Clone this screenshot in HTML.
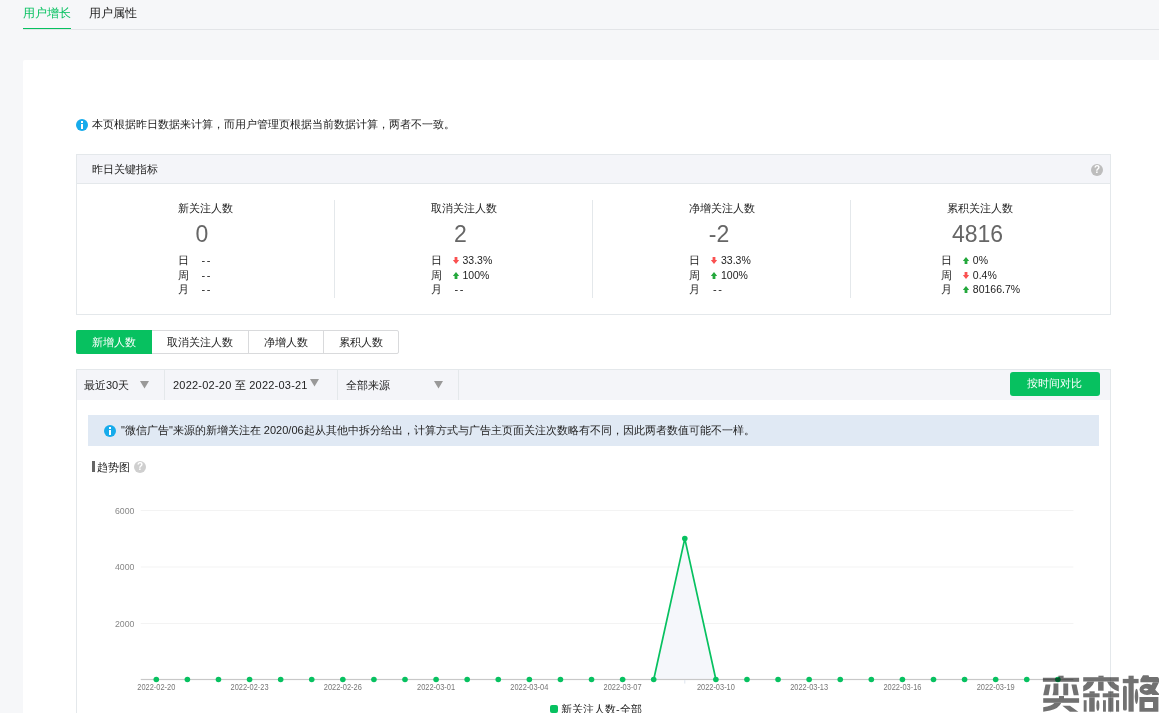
<!DOCTYPE html>
<html><head><meta charset="utf-8">
<style>
*{box-sizing:border-box;margin:0;padding:0}
html,body{width:1159px;height:713px;overflow:hidden}
body{background:#f6f7f9;font-family:"Liberation Sans",sans-serif;color:#222;position:relative}
.a{position:absolute;white-space:nowrap}
.cj{font-size:11px;line-height:12px}
</style></head><body>
<!-- top tabs -->
<div class="a" style="left:23px;top:28px;width:1136px;height:1px;background:#e3e5e8;top:29px"></div>
<div class="a" style="left:23px;top:27.6px;width:48px;height:1.7px;background:#07c160"></div>
<div class="a" style="left:23px;top:6px;font-size:12px;line-height:14px;color:#07c160">用户增长</div>
<div class="a" style="left:89px;top:6px;font-size:12px;line-height:14px;color:#222">用户属性</div>

<!-- white card -->
<div class="a" style="left:23px;top:60px;width:1140px;height:700px;background:#fff;border-radius:2px"></div>

<!-- info line -->
<div class="a" style="left:76px;top:119px;width:12px;height:12px;border-radius:50%;background:#16abeb"></div>
<div class="a" style="left:81px;top:121px;width:2px;height:2px;background:#fff"></div>
<div class="a" style="left:81px;top:124px;width:2px;height:5px;background:#fff"></div>
<div class="a cj" style="left:92px;top:118px">本页根据昨日数据来计算，而用户管理页根据当前数据计算，两者不一致。</div>

<!-- metrics box -->
<div class="a" style="left:76px;top:154px;width:1035px;height:161px;border:1px solid #e4e8eb"></div>
<div class="a" style="left:77px;top:155px;width:1033px;height:29px;background:#f4f5f9;border-bottom:1px solid #e4e8eb"></div>
<div class="a cj" style="left:92px;top:163px">昨日关键指标</div>

<!-- metric columns -->
<div class="a" style="left:334px;top:200px;width:1px;height:98px;background:#e4e8eb"></div>
<div class="a" style="left:592px;top:200px;width:1px;height:98px;background:#e4e8eb"></div>
<div class="a" style="left:850px;top:200px;width:1px;height:98px;background:#e4e8eb"></div>
<style>
.col{position:absolute;top:202px;width:258px;text-align:center}
.blk{display:inline-block;text-align:left;position:relative}
.ttl{font-size:11px;line-height:12px;text-align:center;color:#222}
.num{font-size:23px;line-height:26px;text-align:center;color:#666;margin-top:7px;padding-right:6px}
.rows{margin-top:6px;font-size:11px;line-height:14.5px;color:#222}
.rows span.l{display:inline-block;width:22px}
.up,.dn{display:inline-block;width:6px;height:7px;position:relative;top:0px;margin-right:4px;vertical-align:0px}
.dd{letter-spacing:1.6px;margin-left:2px}
.pct{font-size:10.5px}
</style>
<div class="col" style="left:76px"><div class="blk">
 <div class="ttl">新关注人数</div><div class="num">0</div>
 <div class="rows"><div><span class="l">日</span><span class="dd">--</span></div><div><span class="l">周</span><span class="dd">--</span></div><div><span class="l">月</span><span class="dd">--</span></div></div>
</div></div>
<div class="col" style="left:334.5px"><div class="blk">
 <div class="ttl">取消关注人数</div><div class="num">2</div>
 <div class="rows"><div><span class="l">日</span><svg class="dn" viewBox="0 0 6 7"><path d="M1.6 0h2.8v3H6.2L3 7 -0.2 3h1.8z" fill="#fa5151"/></svg><span class="pct">33.3%</span></div><div><span class="l">周</span><svg class="up" viewBox="0 0 6 7"><path d="M1.6 7h2.8V4H6.2L3 0 -0.2 4h1.8z" fill="#24a83c"/></svg><span class="pct">100%</span></div><div><span class="l">月</span><span class="dd">--</span></div></div>
</div></div>
<div class="col" style="left:593px"><div class="blk">
 <div class="ttl">净增关注人数</div><div class="num">-2</div>
 <div class="rows"><div><span class="l">日</span><svg class="dn" viewBox="0 0 6 7"><path d="M1.6 0h2.8v3H6.2L3 7 -0.2 3h1.8z" fill="#fa5151"/></svg><span class="pct">33.3%</span></div><div><span class="l">周</span><svg class="up" viewBox="0 0 6 7"><path d="M1.6 7h2.8V4H6.2L3 0 -0.2 4h1.8z" fill="#24a83c"/></svg><span class="pct">100%</span></div><div><span class="l">月</span><span class="dd">--</span></div></div>
</div></div>
<div class="col" style="left:851.5px"><div class="blk">
 <div class="ttl">累积关注人数</div><div class="num">4816</div>
 <div class="rows"><div><span class="l">日</span><svg class="up" viewBox="0 0 6 7"><path d="M1.6 7h2.8V4H6.2L3 0 -0.2 4h1.8z" fill="#24a83c"/></svg><span class="pct">0%</span></div><div><span class="l">周</span><svg class="dn" viewBox="0 0 6 7"><path d="M1.6 0h2.8v3H6.2L3 7 -0.2 3h1.8z" fill="#fa5151"/></svg><span class="pct">0.4%</span></div><div><span class="l">月</span><svg class="up" viewBox="0 0 6 7"><path d="M1.6 7h2.8V4H6.2L3 0 -0.2 4h1.8z" fill="#24a83c"/></svg><span class="pct">80166.7%</span></div></div>
</div></div>

<!-- data tabs -->
<div class="a" style="left:76px;top:330px;width:323px;height:24px;border:1px solid #d9dadc;border-radius:2px;background:#fff"></div>
<div class="a" style="left:76px;top:330px;width:76px;height:24px;background:#07c160;border-radius:2px 0 0 2px"></div>
<div class="a" style="left:248px;top:331px;width:1px;height:22px;background:#d9dadc"></div>
<div class="a" style="left:323px;top:331px;width:1px;height:22px;background:#d9dadc"></div>
<div class="a cj" style="left:92px;top:336px;color:#fff">新增人数</div>
<div class="a cj" style="left:167px;top:336px">取消关注人数</div>
<div class="a cj" style="left:264px;top:336px">净增人数</div>
<div class="a cj" style="left:339px;top:336px">累积人数</div>

<!-- chart container -->
<div class="a" style="left:76px;top:369px;width:1035px;height:400px;border:1px solid #e4e8eb;border-bottom:none"></div>
<div class="a" style="left:77px;top:370px;width:1033px;height:30px;background:#f4f5f9"></div>
<div class="a" style="left:164px;top:370px;width:1px;height:30px;background:#e4e8eb"></div>
<div class="a" style="left:337px;top:370px;width:1px;height:30px;background:#e4e8eb"></div>
<div class="a" style="left:458px;top:370px;width:1px;height:30px;background:#e4e8eb"></div>
<div class="a cj" style="left:84px;top:379px">最近30天</div>
<svg class="a" style="left:140px;top:381px" width="9" height="8" viewBox="0 0 9 8"><path d="M0 0h9L4.5 7.5z" fill="#999"/></svg>
<div class="a" style="left:173px;top:379px;font-size:11px;line-height:13px;letter-spacing:0.22px;color:#222">2022-02-20 至 2022-03-21</div>
<svg class="a" style="left:310px;top:379px" width="9" height="8" viewBox="0 0 9 8"><path d="M0 0h9L4.5 7.5z" fill="#999"/></svg>
<div class="a cj" style="left:346px;top:379px">全部来源</div>
<svg class="a" style="left:434px;top:381px" width="9" height="8" viewBox="0 0 9 8"><path d="M0 0h9L4.5 7.5z" fill="#999"/></svg>
<div class="a" style="left:1010px;top:372px;width:90px;height:24px;background:#07c160;border-radius:3px"></div>
<div class="a cj" style="left:1027px;top:377px;color:#fff">按时间对比</div>

<!-- blue notice -->
<div class="a" style="left:88px;top:415px;width:1011px;height:31px;background:#e0e9f4"></div>
<div class="a" style="left:104px;top:425px;width:12px;height:12px;border-radius:50%;background:#16abeb"></div>
<div class="a" style="left:109px;top:427px;width:2px;height:2px;background:#fff"></div>
<div class="a" style="left:109px;top:430px;width:2px;height:5px;background:#fff"></div>
<div class="a cj" style="left:121px;top:424px">"微信广告"来源的新增关注在 2020/06起从其他中拆分给出，计算方式与广告主页面关注次数略有不同，因此两者数值可能不一样。</div>

<!-- trend title -->
<div class="a" style="left:92px;top:461px;width:3px;height:11px;background:#666"></div>
<div class="a cj" style="left:97px;top:461px">趋势图</div>
<div class="a" style="left:134px;top:461px;width:12px;height:12px;border-radius:50%;background:#cfcfcf"></div>
<div class="a" style="left:134px;top:461px;width:12px;height:12px;font-size:10px;line-height:12px;font-weight:bold;color:#fff;text-align:center">?</div>
<div class="a" style="left:1091px;top:164px;width:12px;height:12px;border-radius:50%;background:#bdbdbd"></div>
<div class="a" style="left:1091px;top:164px;width:12px;height:12px;font-size:10px;line-height:12px;font-weight:bold;color:#fff;text-align:center">?</div>

<!-- chart -->
<svg class="a" style="left:0;top:0" width="1159" height="713" viewBox="0 0 1159 713">
<rect x="140.76" y="510.0" width="932.64" height="1" fill="#f3f3f3"/>
<rect x="140.76" y="566.5" width="932.64" height="1" fill="#f3f3f3"/>
<rect x="140.76" y="623.0" width="932.64" height="1" fill="#f3f3f3"/>
<path d="M653.71 679.5 L684.80 538.6 L715.89 679.5Z" fill="#f5f7fb"/>
<path d="M653.71 679.5 L684.80 538.6 L715.89 679.5" fill="none" stroke="#07c160" stroke-width="1.7" stroke-linejoin="round"/>
<rect x="140.76" y="678.9" width="932.64" height="1.2" fill="#c8c8c8"/>
<rect x="684.30" y="680.1" width="1" height="3.5" fill="#dde4ee"/>
<circle cx="156.30" cy="679.5" r="2.8" fill="#07c160"/>
<circle cx="187.39" cy="679.5" r="2.8" fill="#07c160"/>
<circle cx="218.48" cy="679.5" r="2.8" fill="#07c160"/>
<circle cx="249.57" cy="679.5" r="2.8" fill="#07c160"/>
<circle cx="280.66" cy="679.5" r="2.8" fill="#07c160"/>
<circle cx="311.74" cy="679.5" r="2.8" fill="#07c160"/>
<circle cx="342.83" cy="679.5" r="2.8" fill="#07c160"/>
<circle cx="373.92" cy="679.5" r="2.8" fill="#07c160"/>
<circle cx="405.01" cy="679.5" r="2.8" fill="#07c160"/>
<circle cx="436.10" cy="679.5" r="2.8" fill="#07c160"/>
<circle cx="467.18" cy="679.5" r="2.8" fill="#07c160"/>
<circle cx="498.27" cy="679.5" r="2.8" fill="#07c160"/>
<circle cx="529.36" cy="679.5" r="2.8" fill="#07c160"/>
<circle cx="560.45" cy="679.5" r="2.8" fill="#07c160"/>
<circle cx="591.54" cy="679.5" r="2.8" fill="#07c160"/>
<circle cx="622.62" cy="679.5" r="2.8" fill="#07c160"/>
<circle cx="653.71" cy="679.5" r="2.8" fill="#07c160"/>
<circle cx="684.80" cy="538.6" r="2.8" fill="#07c160"/>
<circle cx="715.89" cy="679.5" r="2.8" fill="#07c160"/>
<circle cx="746.98" cy="679.5" r="2.8" fill="#07c160"/>
<circle cx="778.06" cy="679.5" r="2.8" fill="#07c160"/>
<circle cx="809.15" cy="679.5" r="2.8" fill="#07c160"/>
<circle cx="840.24" cy="679.5" r="2.8" fill="#07c160"/>
<circle cx="871.33" cy="679.5" r="2.8" fill="#07c160"/>
<circle cx="902.42" cy="679.5" r="2.8" fill="#07c160"/>
<circle cx="933.50" cy="679.5" r="2.8" fill="#07c160"/>
<circle cx="964.59" cy="679.5" r="2.8" fill="#07c160"/>
<circle cx="995.68" cy="679.5" r="2.8" fill="#07c160"/>
<circle cx="1026.77" cy="679.5" r="2.8" fill="#07c160"/>
<circle cx="1057.86" cy="679.5" r="2.8" fill="#07c160"/>
<g font-family="Liberation Sans" font-size="9" fill="#888" text-anchor="end">
<text x="134.5" y="513.5" textLength="19.5" lengthAdjust="spacingAndGlyphs">6000</text>
<text x="134.5" y="570" textLength="19.5" lengthAdjust="spacingAndGlyphs">4000</text>
<text x="134.5" y="627" textLength="19.5" lengthAdjust="spacingAndGlyphs">2000</text>
</g><g font-family="Liberation Sans" font-size="9" fill="#777">
<text x="137.30" y="689.6" textLength="38" lengthAdjust="spacingAndGlyphs">2022-02-20</text>
<text x="230.57" y="689.6" textLength="38" lengthAdjust="spacingAndGlyphs">2022-02-23</text>
<text x="323.83" y="689.6" textLength="38" lengthAdjust="spacingAndGlyphs">2022-02-26</text>
<text x="417.10" y="689.6" textLength="38" lengthAdjust="spacingAndGlyphs">2022-03-01</text>
<text x="510.36" y="689.6" textLength="38" lengthAdjust="spacingAndGlyphs">2022-03-04</text>
<text x="603.62" y="689.6" textLength="38" lengthAdjust="spacingAndGlyphs">2022-03-07</text>
<text x="696.89" y="689.6" textLength="38" lengthAdjust="spacingAndGlyphs">2022-03-10</text>
<text x="790.15" y="689.6" textLength="38" lengthAdjust="spacingAndGlyphs">2022-03-13</text>
<text x="883.42" y="689.6" textLength="38" lengthAdjust="spacingAndGlyphs">2022-03-16</text>
<text x="976.68" y="689.6" textLength="38" lengthAdjust="spacingAndGlyphs">2022-03-19</text>
</g></svg>
<div class="a" style="left:550px;top:704.5px;width:8px;height:8px;border-radius:2px;background:#07c160"></div>
<div class="a cj" style="left:561px;top:703px">新关注人数-全部</div>
<svg class="a" style="left:0;top:0;mix-blend-mode:multiply" width="1159" height="713" viewBox="0 0 1159 713"><g fill="#717171">
<rect x="1058.4" y="675.7" width="5.2" height="3"/>
<rect x="1042.9" y="677.75" width="36.2" height="4.05"/>
<path d="M1045.5 684.4H1050.6L1048.6 695.3H1043.2Z"/>
<path d="M1053.5 683.5H1058.4V695.3H1052.5Q1053.5 692 1053.5 689Z"/>
<rect x="1063.3" y="683.5" width="4.9" height="11.8"/>
<path d="M1071.4 684.4H1076.5L1078.8 695.3H1073.7Z"/>
<rect x="1059" y="696" width="5" height="3"/>
<rect x="1043.2" y="698.2" width="35.9" height="4.6"/>
<path d="M1054.5 702.8H1061.3Q1059 708.5 1050 710.5L1043.2 711.8V707.3Q1052 706 1054.5 702.8Z"/>
<path d="M1062.4 705.7H1069.9L1078.3 711.7H1069.9Z"/>
<rect x="1098.4" y="675.7" width="5.2" height="2"/>
<rect x="1083.2" y="677.2" width="35.6" height="4.3"/>
<rect x="1098.1" y="681.5" width="5.5" height="9.2"/>
<path d="M1087.5 681.5H1094.4Q1092 688.5 1083.2 691.6V686.1Q1086 684.5 1087.5 681.5Z"/>
<path d="M1107 681.5H1113.4Q1115 684.5 1118.8 685.8V691.6Q1110 688.5 1107 681.5Z"/>
<rect x="1089.5" y="691.3" width="5.2" height="2.5"/>
<rect x="1083.2" y="693.3" width="16.4" height="4"/>
<rect x="1089.2" y="697.3" width="5.5" height="14.4"/>
<rect x="1083.7" y="700.2" width="2.9" height="11.5"/>
<ellipse cx="1097.85" cy="705.6" rx="1.5" ry="5.4"/>
<rect x="1108.2" y="691.3" width="5.2" height="2.5"/>
<rect x="1102.7" y="693.3" width="16.4" height="4"/>
<rect x="1108.2" y="697.3" width="5.2" height="14.4"/>
<rect x="1103" y="700.2" width="2.9" height="11.5"/>
<rect x="1116" y="700.2" width="3.1" height="11.5"/>
<rect x="1128.5" y="675.7" width="5.2" height="36"/>
<rect x="1122.8" y="678.9" width="15.8" height="4.3"/>
<rect x="1123" y="685.8" width="3.8" height="24.7" rx="1.5"/>
<ellipse cx="1136.5" cy="696.4" rx="1.75" ry="7.7"/>
<path d="M1143 675.3H1148.5L1149.2 677H1157.5Q1159 677.3 1159 679V682.3H1140.4V679.5Z"/>
<path fill-rule="evenodd" d="M1147.1 683.8A7.6 5.6 0 1 0 1147.1 695A7.6 5.6 0 1 0 1147.1 683.8Z M1143.3 689.5Q1145.8 687.5 1148.5 689.5Q1145.8 691.4 1143.3 689.5Z"/>
<path d="M1152.8 682.3H1159L1155.2 689.8L1159 693.8V695H1152.3L1149 690.5Z"/>
<path fill-rule="evenodd" d="M1139.4 697H1158.4V711.7H1139.4Z M1144.6 702H1153V708H1144.6Z"/>
</g></svg>
</body></html>
